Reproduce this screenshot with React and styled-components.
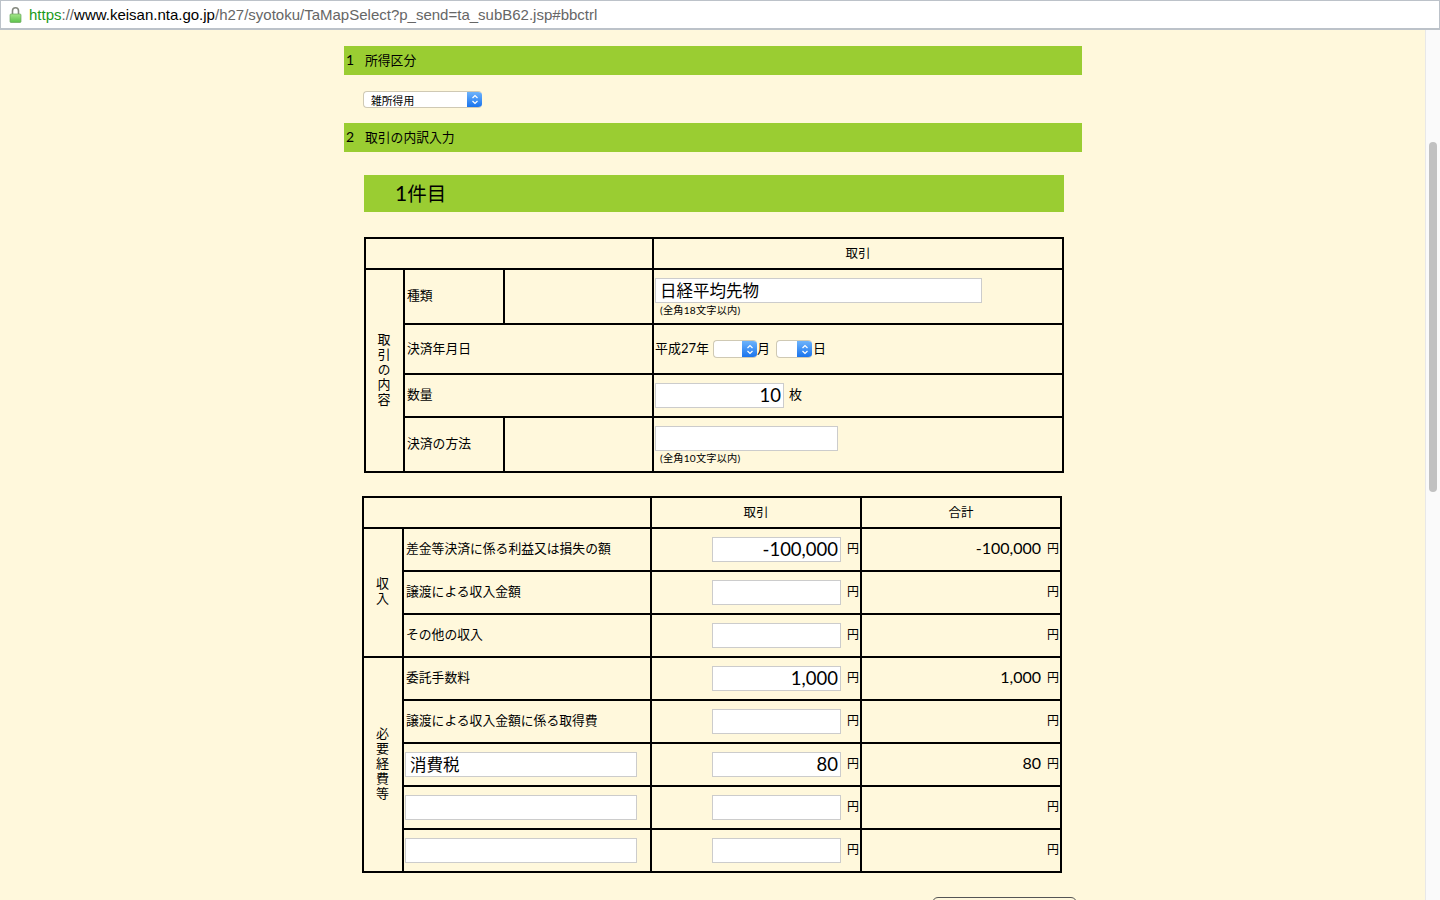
import styled, { createGlobalStyle } from "styled-components";

const GlobalStyle = createGlobalStyle`
  html, body { margin: 0; height: 900px; overflow: hidden; background: #fff8dc; }
  body { font-family: "Noto Sans CJK JP", "Liberation Sans", sans-serif; color: #000; }
  * { box-sizing: border-box; }
`;

const jp = `"Noto Sans CJK JP", sans-serif`;
const digits = `Lato, "Noto Sans CJK JP", sans-serif`;

const Page = styled.div`
  width: 1440px;
  height: 900px;
  overflow: hidden;
  display: flex;
  flex-direction: column;
`;

const AddressBar = styled.div`
  height: 30px;
  flex: none;
  background: #fff;
  border: 1px solid #bcc2c9;
  border-bottom-width: 2px;
  display: flex;
  align-items: center;
  padding-left: 8px;
  gap: 7px;
  font: 15px "Liberation Sans", sans-serif;
  color: #666;
  b { font-weight: normal; color: #000; }
  i { font-style: normal; color: #1a9a1a; }
`;

const Body = styled.div`
  flex: 1;
  display: flex;
  min-height: 0;
`;

const Content = styled.main`
  flex: 1;
  padding: 16px 0 0 344px;
  overflow: hidden;
`;

const ScrollTrack = styled.div`
  width: 15px;
  flex: none;
  background: #fafafa;
  border-left: 1px solid #e8e8e8;
  padding: 112px 3px 0 3px;
`;

const ScrollThumb = styled.div`
  width: 8px;
  height: 350px;
  border-radius: 4px;
  background: #c1c1c1;
`;

const SectionBar = styled.h2`
  width: 738px;
  height: 29px;
  margin: 0;
  padding-bottom: 3px;
  background: #9acd32;
  display: flex;
  align-items: center;
  font-size: 12.8px;
  font-weight: 400;
  span { width: 21px; padding-left: 2px; font-family: ${digits}; font-size: 14px; }
`;

const SelectRow = styled.div`
  display: flex;
  height: 48px;
  padding: 16px 0 0 19px;
`;

const SelectBox = styled.div`
  width: ${(p) => p.$w}px;
  height: ${(p) => p.$h}px;
  display: flex;
  flex: none;
  background: #fff;
  border: 1px solid #cfc9b4;
  border-right: 0;
  border-radius: 4px;
  overflow: hidden;
  font-size: 10.8px;
  line-height: 16px;
`;

const SelectText = styled.span`
  flex: 1;
  padding-left: 7px;
`;

const SelectArrow = styled.span`
  width: 15px;
  flex: none;
  background: linear-gradient(#6db3fb, #1a74ee);
  display: flex;
  align-items: center;
  justify-content: center;
`;

const Inner = styled.div`
  margin: 23px 0 0 20px;
  width: 700px;
`;

const Band = styled.h1`
  height: 37px;
  margin: 0 0 25px;
  padding-left: 31px;
  background: #9acd32;
  font-size: 19.5px;
  font-weight: 400;
  line-height: 35px;
  span { font-family: ${digits}; font-size: 21px; }
`;

const Table = styled.table`
  width: 700px;
  table-layout: fixed;
  border-collapse: collapse;
  font-size: 12.8px;
  margin-left: ${(p) => p.$shift || 0}px;
  margin-bottom: ${(p) => p.$after}px;
`;

const Cell = styled.td`
  border: 2px solid #000;
  padding: ${(p) => p.$top || 0}px 0 0 1px;
  height: ${(p) => p.$h || 43}px;
  vertical-align: middle;
`;

const LabelCell = styled(Cell)`
  padding: 0 0 4px 2px;
`;

const HeadCell = styled.th`
  border: 2px solid #000;
  padding: 0 0 2px;
  height: 31px;
  font-weight: 400;
  font-size: 12.5px;
  text-align: center;
`;

const SideCell = styled.td`
  border: 2px solid #000;
  padding: 3px 1px 0 0;
  text-align: center;
  vertical-align: middle;
`;

const SideText = styled.span`
  display: inline-block;
  writing-mode: vertical-rl;
  letter-spacing: 2px;
  font-size: 13px;
  line-height: 1;
`;

const TextInput = styled.input`
  display: block;
  flex: none;
  width: ${(p) => p.$w}px;
  height: 25px;
  margin: 0;
  padding: 0 2px 2px 4px;
  background: #fff;
  border: 1px solid #ccc;
  border-radius: 0;
  outline: none;
  color: #000;
  font-family: ${(p) => (p.$num ? digits : jp)};
  font-size: ${(p) => (p.$num ? 18.5 : 16.5)}px;
  text-align: ${(p) => (p.$num ? "right" : "left")};
`;

const Hint = styled.div`
  padding: 1px 0 0 5px;
  font-size: 10.2px;
  letter-spacing: 0.2px;
  line-height: 13px;
  font-family: ${digits};
`;

const Inline = styled.div`
  display: flex;
  align-items: center;
  font-family: ${digits};
  font-size: 13px;
`;

const InlineText = styled.span`
  flex: none;
  width: ${(p) => p.$w}px;
  padding: 0 0 4px ${(p) => p.$left || 0}px;
`;

const Amount = styled.div`
  display: flex;
  justify-content: flex-end;
  align-items: center;
  gap: 6px;
  padding-right: 1px;
`;

const Total = styled.span`
  font-family: ${digits};
  font-size: 16px;
  padding-bottom: 4px;
`;

const Yen = styled.span`
  font-family: ${jp};
  font-size: 12px;
  padding-bottom: 4px;
`;

const NextButton = styled.div`
  width: 145px;
  height: 30px;
  margin-left: 568px;
  border: 1px solid #555;
  border-radius: 6px;
`;

const LockIcon = () => (
  <svg width="13" height="16" viewBox="0 0 13 16">
    <defs>
      <linearGradient id="lock" x1="0" y1="0" x2="0" y2="1">
        <stop offset="0" stopColor="#a5e58a" />
        <stop offset="1" stopColor="#5cc24a" />
      </linearGradient>
    </defs>
    <path d="M3.5 7V3.8a3 3 0 0 1 6 0V7" fill="none" stroke="#85897f" strokeWidth="1.6" />
    <rect x="1" y="7" width="11" height="8.5" rx="1" fill="url(#lock)" stroke="#6aa65c" strokeWidth="0.7" />
  </svg>
);

const Updown = () => (
  <svg width="8" height="11" viewBox="0 0 8 11">
    <path d="M1.5 4 4 1.5 6.5 4M1.5 7 4 9.5 6.5 7" fill="none" stroke="#fff" strokeWidth="1.2" />
  </svg>
);

const Select = ({ w, h = 18, children }) => (
  <SelectBox $w={w} $h={h}>
    <SelectText>{children}</SelectText>
    <SelectArrow><Updown /></SelectArrow>
  </SelectBox>
);

const MoneyRow = ({ label, cost, input, total }) => (
  <tr>
    {cost !== undefined ? (
      <Cell><TextInput $w={232} readOnly value={cost} /></Cell>
    ) : (
      <LabelCell>{label}</LabelCell>
    )}
    <Cell>
      <Amount>
        <TextInput $w={129} $num readOnly value={input} />
        <Yen>円</Yen>
      </Amount>
    </Cell>
    <Cell>
      <Amount>
        {total && <Total>{total}</Total>}
        <Yen>円</Yen>
      </Amount>
    </Cell>
  </tr>
);

const App = () => (
  <Page>
    <GlobalStyle />
    <AddressBar>
      <LockIcon />
      <span><i>https</i>://<b>www.keisan.nta.go.jp</b>/h27/syotoku/TaMapSelect?p_send=ta_subB62.jsp#bbctrl</span>
    </AddressBar>
    <Body>
      <Content>
        <SectionBar><span>1</span>所得区分</SectionBar>
        <SelectRow><Select w={119} h={17}>雑所得用</Select></SelectRow>
        <SectionBar><span>2</span>取引の内訳入力</SectionBar>
        <Inner>
          <Band><span>1</span>件目</Band>
          <Table $after={23}>
            <colgroup>
              <col style={{ width: 39 }} />
              <col style={{ width: 100 }} />
              <col style={{ width: 149 }} />
              <col style={{ width: 410 }} />
            </colgroup>
            <tbody>
              <tr>
                <HeadCell colSpan={3} />
                <HeadCell>取引</HeadCell>
              </tr>
              <tr>
                <SideCell rowSpan={4}><SideText>取引の内容</SideText></SideCell>
                <LabelCell $h={55}>種類</LabelCell>
                <Cell $h={55} />
                <Cell $h={55} $top={2}>
                  <TextInput $w={327} readOnly value="日経平均先物" />
                  <Hint>(全角18文字以内)</Hint>
                </Cell>
              </tr>
              <tr>
                <LabelCell $h={50} colSpan={2}>決済年月日</LabelCell>
                <Cell $h={50}>
                  <Inline>
                    <InlineText $w={58}>平成27年</InlineText>
                    <Select w={44} />
                    <InlineText $w={19}>月</InlineText>
                    <Select w={36} />
                    <InlineText $w={14} $left={1}>日</InlineText>
                  </Inline>
                </Cell>
              </tr>
              <tr>
                <LabelCell colSpan={2}>数量</LabelCell>
                <Cell>
                  <Inline>
                    <TextInput $w={129} $num readOnly value="10" />
                    <InlineText $w={20} $left={5}>枚</InlineText>
                  </Inline>
                </Cell>
              </tr>
              <tr>
                <LabelCell $h={55}>決済の方法</LabelCell>
                <Cell $h={55} />
                <Cell $h={55} $top={2}>
                  <TextInput $w={183} readOnly value="" />
                  <Hint>(全角10文字以内)</Hint>
                </Cell>
              </tr>
            </tbody>
          </Table>
          <Table $shift={-2} $after={24}>
            <colgroup>
              <col style={{ width: 40 }} />
              <col style={{ width: 248 }} />
              <col style={{ width: 210 }} />
              <col style={{ width: 200 }} />
            </colgroup>
            <tbody>
              <tr>
                <HeadCell colSpan={2} />
                <HeadCell>取引</HeadCell>
                <HeadCell>合計</HeadCell>
              </tr>
              <tr>
                <SideCell rowSpan={3}><SideText>収入</SideText></SideCell>
                <LabelCell>差金等決済に係る利益又は損失の額</LabelCell>
                <Cell><Amount><TextInput $w={129} $num readOnly value="-100,000" /><Yen>円</Yen></Amount></Cell>
                <Cell><Amount><Total>-100,000</Total><Yen>円</Yen></Amount></Cell>
              </tr>
              <MoneyRow label="譲渡による収入金額" input="" />
              <MoneyRow label="その他の収入" input="" />
              <tr>
                <SideCell rowSpan={5}><SideText>必要経費等</SideText></SideCell>
                <LabelCell>委託手数料</LabelCell>
                <Cell><Amount><TextInput $w={129} $num readOnly value="1,000" /><Yen>円</Yen></Amount></Cell>
                <Cell><Amount><Total>1,000</Total><Yen>円</Yen></Amount></Cell>
              </tr>
              <MoneyRow label="譲渡による収入金額に係る取得費" input="" />
              <MoneyRow cost="消費税" input="80" total="80" />
              <MoneyRow cost="" input="" />
              <MoneyRow cost="" input="" />
            </tbody>
          </Table>
          <NextButton />
        </Inner>
      </Content>
      <ScrollTrack><ScrollThumb /></ScrollTrack>
    </Body>
  </Page>
);

export default App;
